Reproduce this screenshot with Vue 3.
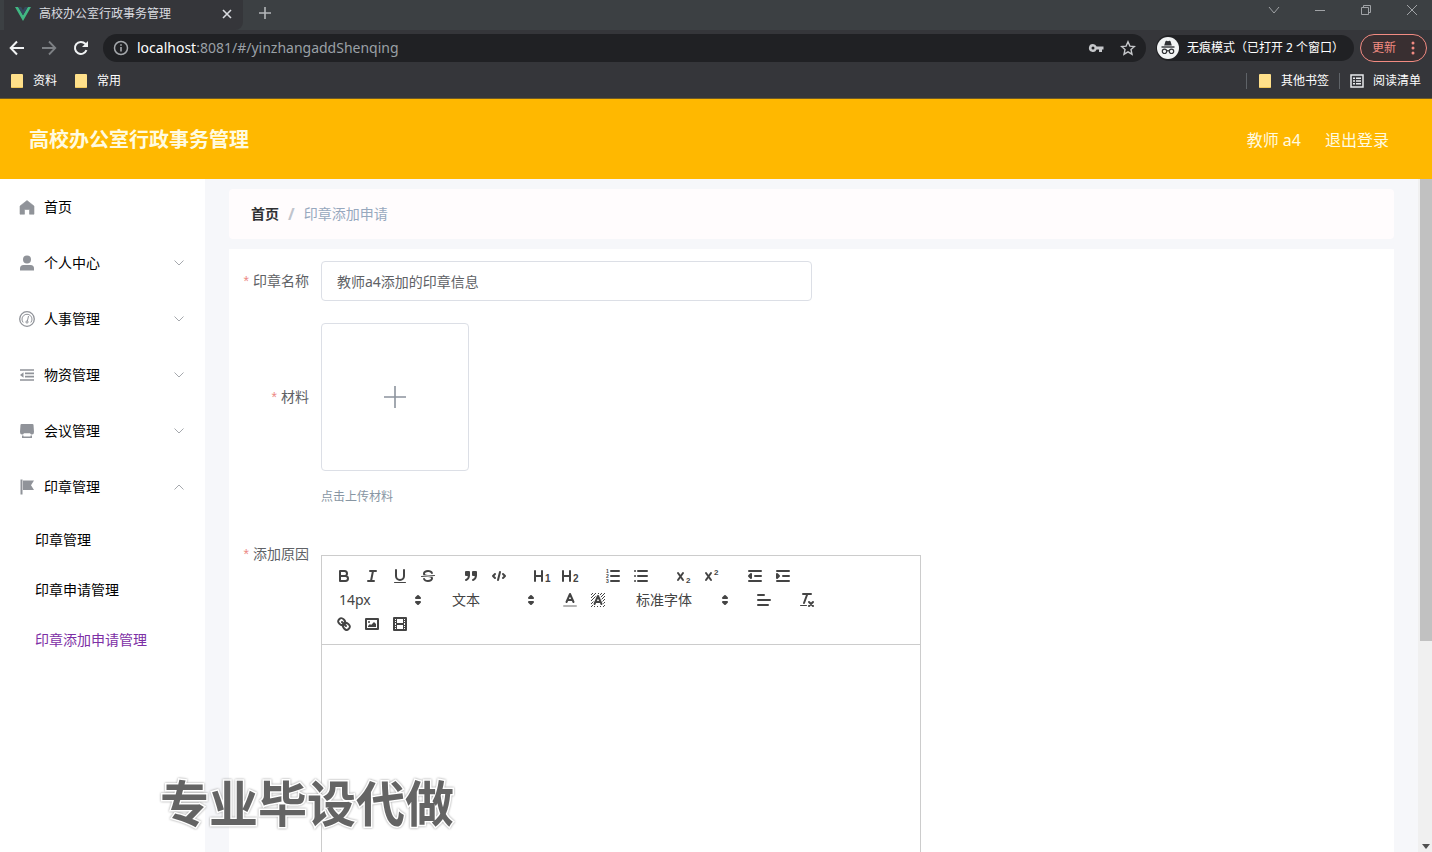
<script setup>
import { ref } from 'vue'

const sealName = ref('教师a4添加的印章信息')
const active = ref('印章添加申请管理')

const menus = [
  { name: '个人中心', icon: 'user' },
  { name: '人事管理', icon: 'gauge' },
  { name: '物资管理', icon: 'fold' },
  { name: '会议管理', icon: 'shop' },
  { name: '印章管理', icon: 'flag', children: ['印章管理', '印章申请管理', '印章添加申请管理'] },
]
</script>

<template>
  <div class="window">
    <div class="tabstrip">
      <div class="tab">
        <svg class="logo" viewBox="0 0 16 14"><path d="M0 0h3.200L8 8.300 12.800 0H16L8 14z" fill="#41b883" /><path d="M3.200 0h3L8 3.200 9.800 0h3L8 8.300z" fill="#35495e" /></svg>
        <span class="tab-title">高校办公室行政事务管理</span>
        <button class="plain tab-close" aria-label="关闭标签页"><svg width="10" height="10" viewBox="0 0 10 10"><path d="M1 1l8 8M9 1L1 9" stroke="#dadce0" stroke-width="1.600" /></svg></button>
      </div>
      <button class="plain new-tab" aria-label="新标签页"><svg width="14" height="14" viewBox="0 0 14 14"><path d="M7 1v12M1 7h12" stroke="#b4b7ba" stroke-width="1.600" /></svg></button>
      <div class="win-controls">
        <button class="plain" aria-label="搜索标签页"><svg viewBox="0 0 12 12"><path d="M1 3l5 6 5-6" /></svg></button>
        <button class="plain" aria-label="最小化"><svg viewBox="0 0 12 12"><path d="M1 6.500h10" /></svg></button>
        <button class="plain" aria-label="还原"><svg viewBox="0 0 12 12"><path d="M1.500 3.500h7v7h-7zM3.500 3.500v-2h7v7h-2" /></svg></button>
        <button class="plain" aria-label="关闭"><svg viewBox="0 0 12 12"><path d="M1 1l10 10M11 1L1 11" /></svg></button>
      </div>
    </div>

    <div class="navbar">
      <div class="nav-buttons">
        <button class="plain" aria-label="后退"><svg width="16" height="16" viewBox="0 0 16 16"><path d="M15 8H2M8 1.500L1.700 8 8 14.500" fill="none" stroke="#f1f3f4" stroke-width="2" /></svg></button>
        <button class="plain" aria-label="前进"><svg width="16" height="16" viewBox="0 0 16 16"><path d="M1 8h13M8 1.500L14.300 8 8 14.500" fill="none" stroke="#7d8084" stroke-width="1.800" /></svg></button>
        <button class="plain" aria-label="重新加载"><svg width="16" height="16" viewBox="0 0 16 16"><path d="M13.500 10.200A6 6 0 1 1 12.300 3.800L14 5.500" fill="none" stroke="#f1f3f4" stroke-width="2" /><path d="M15 1v6H9z" fill="#f1f3f4" /></svg></button>
      </div>
      <div class="address">
        <svg width="16" height="16" viewBox="0 0 16 16"><circle cx="8" cy="8" r="6.500" fill="none" stroke="#a5a8ac" stroke-width="1.500" /><path d="M8 7v4.500M8 4.200v1.600" stroke="#a5a8ac" stroke-width="1.600" /></svg>
        <div class="url" role="textbox" aria-label="地址"><b>localhost</b>:8081/#/yinzhangaddShenqing</div>
        <button class="plain" aria-label="密码"><svg width="16" height="16" viewBox="0 0 16 16"><path fill-rule="evenodd" d="M5 4a4 4 0 1 0 3.600 5.500H11V12h3V9.500h1.500v-3H8.600A4 4 0 0 0 5 4zm0 2.500a1.500 1.500 0 1 1 0 3 1.500 1.500 0 0 1 0-3z" fill="#c6c8cb" /></svg></button>
        <button class="plain" aria-label="收藏"><svg width="16" height="16" viewBox="0 0 16 16"><path d="M8 1.800l1.900 4.300 4.600.4-3.500 3.100 1 4.600L8 11.800l-4 2.400 1-4.600-3.500-3.100 4.600-.4z" fill="none" stroke="#c6c8cb" stroke-width="1.400" /></svg></button>
      </div>
      <button class="incognito">
        <svg width="22" height="22" viewBox="0 0 22 22"><circle cx="11" cy="11" r="11" fill="#f1f3f4" /><path d="M7.200 8.500L8.500 4.200q.3-.7 1-.5L11 4.200l1.500-.5q.7-.2 1 .5l1.300 4.300z" fill="#303236" /><path d="M4.500 10h13" stroke="#303236" stroke-width="1.400" /><g fill="none" stroke="#303236" stroke-width="1.200"><circle cx="7.500" cy="14.300" r="2.200" /><circle cx="14.500" cy="14.300" r="2.200" /><path d="M9.700 14q1.300-.8 2.600 0" /></g></svg>
        <span>无痕模式（已打开 2 个窗口）</span>
      </button>
      <button class="update"><span>更新</span><svg width="4" height="14" viewBox="0 0 4 14" fill="#f28b82"><circle cx="2" cy="2" r="1.500" /><circle cx="2" cy="7" r="1.500" /><circle cx="2" cy="12" r="1.500" /></svg></button>
    </div>

    <div class="bookmarks">
      <a href="#" class="bm"><i class="folder"></i>资料</a>
      <a href="#" class="bm"><i class="folder"></i>常用</a>
      <span class="grow"></span>
      <i class="sep"></i>
      <a href="#" class="bm other"><i class="folder"></i>其他书签</a>
      <i class="sep"></i>
      <a href="#" class="bm reading"><svg width="14" height="14" viewBox="0 0 14 14"><rect x="1" y="1" width="12" height="12" fill="none" stroke="#e8eaed" stroke-width="1.500" /><path d="M3 4.200h2M6 4.200h5M3 7h2M6 7h5M3 9.800h2M6 9.800h5" stroke="#e8eaed" stroke-width="1.400" /></svg>阅读清单</a>
    </div>

    <header class="header">
      <h1>高校办公室行政事务管理</h1>
      <span class="who">教师 a4</span>
      <a href="#" class="logout">退出登录</a>
    </header>

    <div class="body">
      <nav class="sidebar">
        <a href="#" class="menu-row">
          <svg class="mi" viewBox="0 0 16 16"><path d="M8 1.500L15 7v8.200h-4.500V10.500h-5v4.700H1V7z" fill="#909399" stroke="#909399" stroke-linejoin="round" stroke-width=".6" /></svg>首页
        </a>
        <template v-for="m in menus" :key="m.name">
          <button class="menu-row" :aria-expanded="!!m.children">
            <svg v-if="m.icon === 'user'" class="mi" viewBox="0 0 16 16" fill="#909399"><circle cx="8" cy="4.500" r="4" /><path d="M1 15.500v-2q0-3.500 3.500-3.500h7q3.500 0 3.500 3.500v2z" /></svg>
            <svg v-else-if="m.icon === 'gauge'" class="mi" viewBox="0 0 16 16" fill="none" stroke="#909399"><circle cx="8" cy="8" r="7.300" stroke-width="1.300" /><path d="M4.200 11.500A5 5 0 1 1 11.800 11.500M9.500 5L8.400 10" /><circle cx="8" cy="11" r="1.100" /></svg>
            <svg v-else-if="m.icon === 'fold'" class="mi" viewBox="0 0 16 16"><path d="M1 3h14M6 6.400h9M6 9.700h9M1 13h14" stroke="#909399" stroke-width="1.700" /><path d="M1 8l3.500-2.700v5.400z" fill="#909399" /></svg>
            <svg v-else-if="m.icon === 'shop'" class="mi" viewBox="0 0 16 16" fill="#909399"><path d="M2.500 1h11q.8 0 1 .8L15 9q0 2.500-2 2.500h-1l-1-1.300H5L4 11.500H3Q1 11.500 1 9l.5-7.200q.2-.8 1-.8zM3 12.500h1.500V13.500h7v-1H13V15H3z" /></svg>
            <svg v-else class="mi" viewBox="0 0 16 16" fill="#909399"><path d="M1.500.5h2v15h-2zM4 1.500h11L12 6.300l3 4.700H4z" /></svg>
            <span>{{ m.name }}</span>
            <svg class="chev" viewBox="0 0 10 10"><path :d="m.children ? 'M.5 7.500L5 3l4.500 4.500' : 'M.5 2.500L5 7l4.500-4.500'" /></svg>
          </button>
          <a v-for="c in m.children" :key="c" href="#" class="sub" :class="{ on: active === c }" @click.prevent="active = c">{{ c }}</a>
        </template>
      </nav>

      <main class="content">
        <div class="crumbs"><a href="#">首页</a><span class="slash">/</span><span>印章添加申请</span></div>
        <form class="card" @submit.prevent>
          <div class="item">
            <label for="seal-name"><em>*</em>印章名称</label>
            <input id="seal-name" v-model="sealName" type="text" />
          </div>
          <div class="item">
            <label class="tall" for="upload"><em>*</em>材料</label>
            <div>
              <button id="upload" type="button" class="upload"><svg width="24" height="24" viewBox="0 0 24 24"><path d="M12 1v22M1 12h22" stroke="#8c939d" stroke-width="1.600" /></svg></button>
              <p class="tip">点击上传材料</p>
            </div>
          </div>
          <div class="item editor-item">
            <label for="reason"><em>*</em>添加原因</label>
            <div class="editor">
              <div class="toolbar">
                <span class="grp">
                  <button type="button" aria-label="加粗"><svg viewBox="0 0 18 18"><path d="M5 4h4.500a2.500 2.500 0 0 1 0 5H5zM5 9h5.500a2.500 2.500 0 0 1 0 5H5z" /></svg></button>
                  <button type="button" aria-label="斜体"><svg viewBox="0 0 18 18"><path d="M7 4h6M5 14h6M8 14l2-10" /></svg></button>
                  <button type="button" aria-label="下划线"><svg viewBox="0 0 18 18"><path d="M5 3v6a4 4 0 0 0 8 0V3" /><rect class="f" x="3" y="15" width="12" height="1" rx=".5" /></svg></button>
                  <button type="button" aria-label="删除线"><svg viewBox="0 0 18 18"><path class="thin" d="M15.500 8.500l-13 1" /><path class="f" d="M9.007,8C6.542,7.791,6,7.519,6,6.500,6,5.792,7.283,5,9,5c1.571,0,2.765.679,2.969,1.309a1,1,0,0,0,1.900-.617C13.356,4.106,11.354,3,9,3,6.200,3,4,4.538,4,6.500a3.200,3.200,0,0,0,.5,1.843Z" /><path class="f" d="M8.984,10C11.457,10.208,12,10.479,12,11.500c0,.708-1.283,1.500-3,1.500-1.571,0-2.765-.679-2.969-1.309a1,1,0,1,0-1.900.617C4.644,13.894,6.646,15,9,15c2.800,0,5-1.538,5-3.500a3.200,3.200,0,0,0-.5-1.843Z" /></svg></button>
                </span>
                <span class="grp">
                  <button type="button" aria-label="引用"><svg viewBox="0 0 18 18"><rect class="fs" x="4" y="5" width="3" height="3" /><rect class="fs" x="11" y="5" width="3" height="3" /><path d="M7 8c0 4-3 5-3 5M14 8c0 4-3 5-3 5" /></svg></button>
                  <button type="button" aria-label="代码"><svg viewBox="0 0 18 18"><path d="M5 7L3 9l2 2M13 7l2 2-2 2M10 5L8 13" /></svg></button>
                </span>
                <span class="grp">
                  <button type="button" aria-label="标题 1"><svg viewBox="0 0 18 18"><path d="M2 4v10M9 4v10M2 9h7" /><text x="12" y="15" font-size="10">1</text></svg></button>
                  <button type="button" aria-label="标题 2"><svg viewBox="0 0 18 18"><path d="M2 4v10M9 4v10M2 9h7" /><text x="12" y="15" font-size="10">2</text></svg></button>
                </span>
                <span class="grp">
                  <button type="button" aria-label="有序列表"><svg viewBox="0 0 18 18"><path d="M7 4h8M7 9h8M7 14h8" /><text x="2" y="6" font-size="5">1</text><text x="2" y="11" font-size="5">2</text><text x="2" y="16" font-size="5">3</text></svg></button>
                  <button type="button" aria-label="无序列表"><svg viewBox="0 0 18 18"><path d="M6 4h9M6 9h9M6 14h9M3 4h.01M3 9h.01M3 14h.01" /></svg></button>
                </span>
                <span class="grp">
                  <button type="button" aria-label="下标"><svg viewBox="0 0 18 18"><path d="M3 6l5 7M8 6l-5 7" /><text x="11" y="16" font-size="8">2</text></svg></button>
                  <button type="button" aria-label="上标"><svg viewBox="0 0 18 18"><path d="M3 6l5 7M8 6l-5 7" /><text x="11" y="8" font-size="8">2</text></svg></button>
                </span>
                <span class="grp">
                  <button type="button" aria-label="减少缩进"><svg viewBox="0 0 18 18"><path d="M3 14h12M3 4h12M9 9h6" /><path class="fs" d="M5 7v4L3 9z" /></svg></button>
                  <button type="button" aria-label="增加缩进"><svg viewBox="0 0 18 18"><path d="M3 14h12M3 4h12M9 9h6" /><path class="fs" d="M3 7v4l2-2z" /></svg></button>
                </span>
                <span class="grp picker">
                  <select aria-label="字号"><option>14px</option><option>16px</option></select>
                  <svg viewBox="0 0 18 18"><path class="fs" d="M7 11l2 2 2-2zM7 7l2-2 2 2z" /></svg>
                </span>
                <span class="grp picker">
                  <select aria-label="段落"><option>文本</option><option>标题</option></select>
                  <svg viewBox="0 0 18 18"><path class="fs" d="M7 11l2 2 2-2zM7 7l2-2 2 2z" /></svg>
                </span>
                <span class="grp">
                  <button type="button" aria-label="文字颜色"><svg viewBox="0 0 18 18"><path opacity=".4" d="M3 15h12" /><path d="M5.500 11L9 3l3.500 8M11.630 9H6.380" /></svg></button>
                  <button type="button" aria-label="背景颜色"><svg viewBox="0 0 18 18"><path class="hatch" d="M2 4l2-2M2 7l5-5M2 10l8-8M2 13l11-11M2 16L16 2M5 16L16 5M8 16l8-8M11 16l5-5M14 16l2-2" /><path class="halo" d="M5.500 13L9 5l3.500 8z" /><path d="M5.500 13L9 5l3.500 8M11.630 11H6.380" /></svg></button>
                </span>
                <span class="grp picker wide">
                  <select aria-label="字体"><option>标准字体</option></select>
                  <svg viewBox="0 0 18 18"><path class="fs" d="M7 11l2 2 2-2zM7 7l2-2 2 2z" /></svg>
                </span>
                <span class="grp">
                  <button type="button" aria-label="对齐"><svg viewBox="0 0 18 18"><path d="M3 9h12M3 14h10M3 4h6" /></svg></button>
                </span>
                <span class="grp">
                  <button type="button" aria-label="清除格式"><svg viewBox="0 0 18 18"><path d="M5 3h8M6 12l3.350-9M11 11l4 4M15 11l-4 4" /><rect class="f" x="2" y="14" width="7" height="1" rx=".5" /></svg></button>
                </span>
                <span class="grp">
                  <button type="button" aria-label="链接"><svg viewBox="0 0 18 18"><path d="M7 7l4 4" /><path d="M8.900,4.577a3.476,3.476,0,0,1,.36,4.679A3.476,3.476,0,0,1,4.577,8.900C3.185,7.500,2.035,6.400,4.217,4.217S7.500,3.185,8.900,4.577Z" /><path d="M13.423,9.100a3.476,3.476,0,0,0-4.679-.36,3.476,3.476,0,0,0,.36,4.679c1.392,1.392,2.500,2.542,4.679.36S14.815,10.500,13.423,9.100Z" /></svg></button>
                  <button type="button" aria-label="图片"><svg viewBox="0 0 18 18"><rect x="3" y="4" width="12" height="10" /><circle class="f" cx="6" cy="7" r="1" /><path class="f" d="M5 12v-1l2-2 1 1 3-3 2 2v3z" /></svg></button>
                  <button type="button" aria-label="视频"><svg viewBox="0 0 18 18"><rect x="3" y="3" width="12" height="12" /><path class="f" d="M5 3h1v12H5zM12 3h1v12h-1zM5 8h8v2H5zM3 5h3v1H3zM3 7h3v1H3zM3 10h3v1H3zM3 12h3v1H3zM12 5h3v1h-3zM12 7h3v1h-3zM12 10h3v1h-3zM12 12h3v1h-3z" /></svg></button>
                </span>
              </div>
              <textarea id="reason"></textarea>
            </div>
          </div>
        </form>
      </main>

      <div class="scrollbar">
        <div class="thumb"></div>
        <svg width="8" height="5" viewBox="0 0 8 5"><path d="M0 0h8L4 5z" fill="#505050" /></svg>
      </div>
    </div>

    <div class="watermark">专业毕设代做</div>
  </div>
</template>

<style>
html, body { margin: 0; overflow: hidden; }
</style>

<style scoped>
* { box-sizing: border-box; }
.window {
  height: 100vh;
  display: flex;
  flex-direction: column;
  overflow: hidden;
  position: relative;
  font: 14px/20px "Noto Sans", "Noto Sans CJK SC", sans-serif;
  color: #000;
  background: #fff;
}
button, input, select, textarea { font: inherit; color: inherit; }
button { cursor: pointer; }
a { color: inherit; text-decoration: none; }
svg { display: block; flex: none; }
.plain { display: flex; align-items: center; justify-content: center; padding: 0; border: 0; background: none; }

.tabstrip { flex: none; height: 30px; display: flex; align-items: center; background: #3c4043; padding-left: 4px; }
.tab { width: 239px; height: 30px; display: flex; align-items: center; padding: 0 10px 2px 11px; background: #35363a; border-radius: 0 0 8px 0; color: #dadce0; font-size: 12px; }
.logo { width: 16px; height: 14px; margin-right: 8px; }
.tab-title { flex: 1; }
.tab-close { width: 12px; height: 16px; }
.new-tab { width: 20px; height: 20px; margin: 0 auto 4px 12px; }
.win-controls { display: flex; gap: 6px; padding-bottom: 10px; }
.win-controls button { width: 40px; height: 20px; }
.win-controls svg { width: 12px; height: 12px; fill: none; stroke: #a0a3a6; }

.navbar { flex: none; height: 36px; display: flex; align-items: center; padding: 0 5px 0 1px; background: #35363a; }
.nav-buttons { display: flex; width: 102px; }
.nav-buttons button { width: 32px; height: 28px; }
.address { flex: 1; height: 28px; display: flex; align-items: center; padding: 0 10px; border-radius: 14px; background: #202124; }
.url { flex: 1; margin-left: 8px; font-family: "Noto Sans", sans-serif; font-size: 14px; color: #9aa0a6; }
.url b { font-weight: 400; color: #fff; }
.address button { width: 16px; height: 16px; margin-left: 16px; }
.incognito { display: flex; align-items: center; gap: 8px; height: 26px; margin: 0 6px 0 10px; padding: 0 10px 0 1px; border: 0; border-radius: 13px; background: #202124; color: #fff; font-size: 12px; white-space: nowrap; }
.update { display: flex; align-items: center; justify-content: space-between; width: 67px; height: 28px; padding: 0 11px; border: 1px solid #f28b82; border-radius: 14px; background: #392f31; color: #f28b82; font-size: 12px; }

.bookmarks { flex: none; height: 33px; display: flex; align-items: center; padding: 0 11px 2px; background: #35363a; border-bottom: 1px solid #6e5a26; color: #fff; font-size: 12px; }
.bm { display: flex; align-items: center; margin-right: 18px; gap: 10px; }
.folder { width: 12px; height: 14px; background: #ffe08a; border-radius: 1px; border-bottom: 1px solid #f0c75a; }
.grow { flex: 1; }
.sep { width: 1px; height: 16px; background: #5f6368; }
.other { margin: 0 10px 0 12px; }
.reading { margin: 0 0 0 10px; gap: 9px; }

.header { flex: none; height: 80px; display: flex; align-items: center; padding: 2px 43px 0 29px; background: #ffb800; color: #fffbe0; font-size: 16px; }
.header h1 { flex: 1; margin: 0; font-size: 20px; line-height: 28px; font-weight: 700; }
.who { margin-right: 24px; }

.body { flex: 1; min-height: 0; display: flex; background: #f6f7fa; }
.sidebar { flex: none; width: 205px; background: #fff; }
.menu-row { display: flex; align-items: center; width: 100%; height: 56px; padding: 0 21px 0 19px; border: 0; background: none; text-align: left; }
.menu-row span { flex: 1; }
.mi { width: 16px; height: 16px; margin-right: 9px; }
.chev { width: 10px; height: 10px; fill: none; stroke: #a5a8ad; }
.sub { display: block; padding-left: 35px; line-height: 50px; }
.sub.on { color: #7d2fa5; }

.content { flex: 1; min-width: 0; display: flex; flex-direction: column; gap: 10px; padding: 10px 24px 0; overflow: hidden; }
.crumbs { flex: none; height: 50px; display: flex; align-items: center; padding-left: 22px; border-radius: 4px; background: #fffcfd; color: #97a8be; }
.crumbs a { color: #303133; font-weight: 700; }
.slash { margin: 0 9px; color: #c0c4cc; font-size: 16px; font-weight: 700; }
.card { flex: none; padding: 12px 0; background: #fff; color: #606266; }
.item { display: flex; margin-bottom: 22px; }
label { flex: none; width: 92px; padding-right: 12px; line-height: 40px; text-align: right; }
label em { margin-right: 4px; color: #ec8a85; font-family: "Liberation Sans", sans-serif; font-style: normal; }
label.tall { line-height: 148px; height: 148px; }
.item input { width: 491px; height: 40px; padding: 0 15px; border: 1px solid #dcdfe6; border-radius: 4px; background: #fff; }
.upload { display: flex; align-items: center; justify-content: center; width: 148px; height: 148px; padding: 0; border: 1px solid #dcdfe6; border-radius: 4px; background: #fff; }
.tip { margin: 11px 0 0; font-size: 12px; line-height: 30px; color: #8896a3; }
.editor { width: 600px; margin-top: 21px; }
.toolbar { display: flex; flex-wrap: wrap; padding: 8px; border: 1px solid #ccc; }
.grp { display: flex; height: 24px; margin-right: 15px; }
.grp button { width: 28px; height: 24px; padding: 3px 5px; border: 0; background: none; }
.grp svg { width: 18px; height: 18px; overflow: visible; fill: none; stroke: #444; stroke-width: 2; stroke-linecap: round; stroke-linejoin: round; }
.grp svg .thin { stroke-width: 1; }
.grp svg .f { fill: #444; stroke: none; }
.grp svg .fs { fill: #444; }
.grp svg .hatch { stroke-width: 1; stroke-linecap: butt; }
.grp svg .halo { fill: #fff; stroke: #fff; stroke-width: 4; }
.grp svg text { fill: #444; stroke: none; font-family: "Liberation Sans", sans-serif; font-weight: 700; }
.picker { position: relative; width: 98px; }
.picker.wide { width: 108px; }
.picker select { width: 100%; height: 24px; padding: 0 9px; border: 0; background: none; appearance: none; color: #444; }
.picker svg { position: absolute; right: 1px; top: 3px; pointer-events: none; }
textarea { display: block; width: 100%; height: 400px; padding: 12px 15px; border: 1px solid #ccc; border-top: 0; resize: none; background: #fff; }

.scrollbar { flex: none; width: 14px; display: flex; flex-direction: column; align-items: center; justify-content: space-between; padding: 0 0 3px 2px; background: #f0f0f0; }
.thumb { width: 100%; height: 69%; background: #c1c1c1; }

.watermark {
  position: absolute;
  left: 160px;
  bottom: 14px;
  font-size: 49px;
  line-height: 70px;
  font-weight: 700;
  color: #646464;
  -webkit-text-stroke: 3px #fff;
  paint-order: stroke fill;
  filter: drop-shadow(0 0 1px #999);
  pointer-events: none;
}
</style>
